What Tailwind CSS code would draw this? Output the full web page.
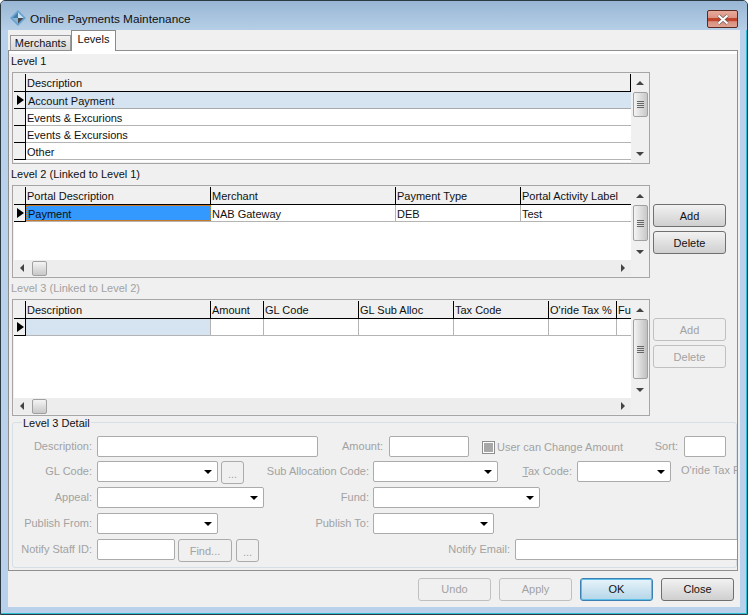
<!DOCTYPE html>
<html lang="en">
<head>
<meta charset="UTF-8">
<title>Online Payments Maintenance</title>
<script src="https://cdn.jsdelivr.net/npm/@tailwindcss/browser@4"></script>
</head>
<body class="bg-white">
<!-- Window frame -->
<div class="w-[748px] h-[615px] overflow-hidden flex flex-col bg-[#b9d1ea] border border-[#2c3a44] rounded-t-[5px] shadow-[inset_-1px_-1px_0_#2fbdd6] font-['Liberation_Sans',sans-serif] text-[11px] leading-[14px] text-[#111]">

  <!-- Title bar -->
  <div class="h-[29px] shrink-0 flex bg-gradient-to-b from-[#98b6d4] to-[#b6cfe7]">
    <svg class="w-[16px] h-[16px] ml-[9px] mt-[9px]" viewBox="0 0 16 16"><path d="M8 0l8 8-8 8-8-8z" fill="#6aa3cf"/><path d="M8 2.5L13.5 8H8z" fill="#c9e2f3"/><path d="M2.5 8L8 2.5V8z" fill="#3f7fb0"/><path d="M8 8h5.5L8 13.5z" fill="#45494d"/><path d="M2.5 8H8v5.5z" fill="#8fb4cf"/></svg>
    <span class="ml-[4px] mt-[11px] text-[11.8px] h-[14px] text-[#101010]">Online Payments Maintenance</span>
    <div class="ml-auto mr-[9px] mt-[9px] w-[31px] h-[18px] flex items-center justify-center border border-[#5a2a22] rounded-[2px] bg-[linear-gradient(#e8ab9c_0%,#dc9383_42%,#c0452c_44%,#c0452c_64%,#d9907f_66%,#e0a191_100%)]">
      <svg class="w-[14px] h-[11px]" viewBox="0 0 14 11"><path d="M2.5 1.5l9 8M11.5 1.5l-9 8" stroke="#6a5a58" stroke-width="3.6" fill="none"/><path d="M2.5 1.5l9 8M11.5 1.5l-9 8" stroke="#fff" stroke-width="2.2" fill="none"/></svg>
    </div>
  </div>

  <!-- Client area -->
  <div class="ml-[7px] w-[732px] h-[577px] shrink-0 bg-[#f0f0f0] flex flex-col">
    <!-- Tabs -->
    <div class="h-[20px] shrink-0 flex items-end pl-[2px]">
      <div class="w-[61px] h-[15px] border border-b-0 border-[#9a9a9a] bg-gradient-to-b from-[#f2f2f2] to-[#d8d8d8] text-center leading-[15px]">Merchants</div>
      <div class="w-[45px] h-[21px] border border-b-0 border-[#8a8a8a] bg-white text-center leading-[17px] relative top-[1px] z-10">Levels</div>
    </div>

    <!-- Tab page -->
    <div class="w-[730px] h-[521px] shrink-0 border border-[#8f8f8f] overflow-hidden">
      <div class="h-[3px] bg-white"></div>
      <div class="pl-[2px]">

        <!-- Level 1 -->
        <div class="h-[14px]">Level 1</div>
        <div class="mt-[4px] ml-[1px] w-[638px] h-[92px] border border-[#a6a6a6] p-[1px] flex">
          <div class="w-[617px] bg-white">
            <div class="flex h-[18px] bg-[#f0f0f0] border-b border-black">
              <div class="w-[12px] border-r border-black"></div>
              <div class="w-[605px] pl-[1px] pt-[2px] border-r border-black">Description</div>
            </div>
            <div class="flex h-[17px] bg-[#d6e4f1] border-b border-[#a9a9a9]">
              <div class="w-[12px] bg-[#f0f0f0] border-r border-black border-b border-b-black -mb-[1px] flex items-center pl-[3px]"><div class="w-0 h-0 border-y-[5px] border-y-transparent border-l-[7px] border-l-black"></div></div>
              <div class="pl-[2px] pt-[2px]">Account Payment</div>
            </div>
            <div class="flex h-[17px] border-b border-[#b4b4b4]">
              <div class="w-[12px] bg-[#f0f0f0] border-r border-black border-b border-b-black -mb-[1px]"></div>
              <div class="pl-[1px] pt-[2px]">Events &amp; Excurions</div>
            </div>
            <div class="flex h-[17px] border-b border-[#b4b4b4]">
              <div class="w-[12px] bg-[#f0f0f0] border-r border-black border-b border-b-black -mb-[1px]"></div>
              <div class="pl-[1px] pt-[2px]">Events &amp; Excursions</div>
            </div>
            <div class="flex h-[17px] border-b border-[#b4b4b4]">
              <div class="w-[12px] bg-[#f0f0f0] border-r border-black border-b border-b-black -mb-[1px]"></div>
              <div class="pl-[1px] pt-[2px]">Other</div>
            </div>
          </div>
          <!-- vertical scrollbar -->
          <div class="w-[16px] ml-[1px] flex flex-col items-center bg-[#f0f0f0]">
            <div class="h-[18px] flex items-center"><div class="w-0 h-0 border-x-[4px] border-x-transparent border-b-[4px] border-b-[#444]"></div></div>
            <div class="w-[15px] h-[25px] border border-[#a0a0a0] rounded-[2px] bg-gradient-to-r from-[#f4f4f4] to-[#c8c8c8] flex flex-col items-center justify-center gap-[1px]">
              <div class="w-[7px] h-[1px] bg-[#666]"></div><div class="w-[7px] h-[1px] bg-[#666]"></div><div class="w-[7px] h-[1px] bg-[#666]"></div><div class="w-[7px] h-[1px] bg-[#666]"></div>
            </div>
            <div class="mt-auto h-[17px] flex items-center"><div class="w-0 h-0 border-x-[4px] border-x-transparent border-t-[4px] border-t-[#444]"></div></div>
          </div>
        </div>

        <!-- Level 2 -->
        <div class="h-[14px] mt-[3px]">Level 2 (Linked to Level 1)</div>
        <div class="flex mt-[4px]">
          <div class="ml-[1px] w-[638px] h-[93px] border border-[#a6a6a6] p-[1px]">
            <div class="flex h-[73px]">
              <div class="w-[617px] bg-white overflow-hidden">
                <div class="flex h-[18px] bg-[#f0f0f0] border-b border-black whitespace-nowrap">
                  <div class="w-[12px] border-r border-black"></div>
                  <div class="w-[185px] pl-[1px] pt-[2px] border-r border-black">Portal Description</div>
                  <div class="w-[185px] pl-[1px] pt-[2px] border-r border-black">Merchant</div>
                  <div class="w-[125px] pl-[1px] pt-[2px] border-r border-black">Payment Type</div>
                  <div class="w-[110px] pl-[1px] pt-[2px]">Portal Activity Label</div>
                </div>
                <div class="flex h-[17px] border-b border-[#b4b4b4]">
                  <div class="w-[12px] bg-[#f0f0f0] border-r border-black border-b border-b-black -mb-[1px] flex items-center pl-[3px]"><div class="w-0 h-0 border-y-[5px] border-y-transparent border-l-[7px] border-l-black"></div></div>
                  <div class="w-[185px] pl-[1px] pt-[1px] bg-[#3399ff] border border-dotted border-[#c77a2a] text-[#0b0b0b]">Payment</div>
                  <div class="w-[185px] pl-[1px] pt-[2px] border-r border-[#b4b4b4]">NAB Gateway</div>
                  <div class="w-[125px] pl-[1px] pt-[2px] border-r border-[#b4b4b4]">DEB</div>
                  <div class="w-[110px] pl-[1px] pt-[2px]">Test</div>
                </div>
              </div>
              <div class="w-[16px] ml-[1px] flex flex-col items-center bg-[#f0f0f0]">
                <div class="h-[18px] flex items-center"><div class="w-0 h-0 border-x-[4px] border-x-transparent border-b-[4px] border-b-[#444]"></div></div>
                <div class="w-[15px] h-[36px] border border-[#a0a0a0] rounded-[2px] bg-gradient-to-r from-[#f4f4f4] to-[#c8c8c8] flex flex-col items-center justify-center gap-[1px]">
                  <div class="w-[7px] h-[1px] bg-[#666]"></div><div class="w-[7px] h-[1px] bg-[#666]"></div><div class="w-[7px] h-[1px] bg-[#666]"></div><div class="w-[7px] h-[1px] bg-[#666]"></div>
                </div>
                <div class="mt-auto h-[17px] flex items-center"><div class="w-0 h-0 border-x-[4px] border-x-transparent border-t-[4px] border-t-[#444]"></div></div>
              </div>
            </div>
            <!-- horizontal scrollbar -->
            <div class="w-[617px] h-[16px] bg-[#ededed] flex items-center">
              <div class="ml-[6px] w-0 h-0 border-y-[4px] border-y-transparent border-r-[4px] border-r-[#444]"></div>
              <div class="ml-[8px] w-[15px] h-[15px] border border-[#a0a0a0] rounded-[2px] bg-gradient-to-b from-[#f4f4f4] to-[#c8c8c8]"></div>
              <div class="ml-auto mr-[6px] w-0 h-0 border-y-[4px] border-y-transparent border-l-[4px] border-l-[#444]"></div>
            </div>
          </div>
          <div class="ml-[3px] mt-[19px] flex flex-col gap-[4px]">
            <div class="w-[73px] h-[23px] border border-[#707070] rounded-[3px] bg-gradient-to-b from-[#f2f2f2] to-[#cfcfcf] text-center leading-[23px]">Add</div>
            <div class="w-[73px] h-[23px] border border-[#707070] rounded-[3px] bg-gradient-to-b from-[#f2f2f2] to-[#cfcfcf] text-center leading-[23px]">Delete</div>
          </div>
        </div>

        <!-- Level 3 -->
        <div class="h-[14px] mt-[3px] text-[#a2a2a2]">Level 3 (Linked to Level 2)</div>
        <div class="flex mt-[4px]">
          <div class="ml-[1px] w-[638px] h-[117px] border border-[#a6a6a6] p-[1px]">
            <div class="flex h-[97px]">
              <div class="w-[617px] bg-white overflow-hidden">
                <div class="flex h-[18px] bg-[#f0f0f0] border-b border-black whitespace-nowrap">
                  <div class="w-[12px] border-r border-black"></div>
                  <div class="w-[185px] pl-[1px] pt-[2px] border-r border-black">Description</div>
                  <div class="w-[53px] pl-[1px] pt-[2px] border-r border-black">Amount</div>
                  <div class="w-[95px] pl-[1px] pt-[2px] border-r border-black">GL Code</div>
                  <div class="w-[95px] pl-[1px] pt-[2px] border-r border-black">GL Sub Alloc</div>
                  <div class="w-[95px] pl-[1px] pt-[2px] border-r border-black">Tax Code</div>
                  <div class="w-[68px] pl-[1px] pt-[2px] border-r border-black">O'ride Tax %</div>
                  <div class="w-[14px] pl-[1px] pt-[2px] overflow-hidden">Fu</div>
                </div>
                <div class="flex h-[17px] border-b border-[#b4b4b4]">
                  <div class="w-[12px] bg-[#f0f0f0] border-r border-black border-b border-b-black -mb-[1px] flex items-center pl-[3px]"><div class="w-0 h-0 border-y-[5px] border-y-transparent border-l-[7px] border-l-black"></div></div>
                  <div class="w-[185px] bg-[#d6e4f1] border-r border-[#b4b4b4]"></div>
                  <div class="w-[53px] border-r border-[#b4b4b4]"></div>
                  <div class="w-[95px] border-r border-[#b4b4b4]"></div>
                  <div class="w-[95px] border-r border-[#b4b4b4]"></div>
                  <div class="w-[95px] border-r border-[#b4b4b4]"></div>
                  <div class="w-[68px] border-r border-[#b4b4b4]"></div>
                </div>
              </div>
              <div class="w-[16px] ml-[1px] flex flex-col items-center bg-[#f0f0f0]">
                <div class="h-[18px] flex items-center"><div class="w-0 h-0 border-x-[4px] border-x-transparent border-b-[4px] border-b-[#444]"></div></div>
                <div class="w-[15px] h-[60px] border border-[#a0a0a0] rounded-[2px] bg-gradient-to-r from-[#f4f4f4] to-[#c0c0c0] flex flex-col items-center justify-center gap-[1px]">
                  <div class="w-[7px] h-[1px] bg-[#666]"></div><div class="w-[7px] h-[1px] bg-[#666]"></div><div class="w-[7px] h-[1px] bg-[#666]"></div><div class="w-[7px] h-[1px] bg-[#666]"></div>
                </div>
                <div class="mt-auto h-[17px] flex items-center"><div class="w-0 h-0 border-x-[4px] border-x-transparent border-t-[4px] border-t-[#444]"></div></div>
              </div>
            </div>
            <div class="w-[617px] h-[16px] bg-[#ededed] flex items-center">
              <div class="ml-[6px] w-0 h-0 border-y-[4px] border-y-transparent border-r-[4px] border-r-[#444]"></div>
              <div class="ml-[8px] w-[15px] h-[15px] border border-[#a0a0a0] rounded-[2px] bg-gradient-to-b from-[#f4f4f4] to-[#c8c8c8]"></div>
              <div class="ml-auto mr-[6px] w-0 h-0 border-y-[4px] border-y-transparent border-l-[4px] border-l-[#444]"></div>
            </div>
          </div>
          <div class="ml-[3px] mt-[19px] flex flex-col gap-[4px] text-[#a2a2a2]">
            <div class="w-[73px] h-[23px] border border-[#c0c0c0] rounded-[3px] text-center leading-[23px]">Add</div>
            <div class="w-[73px] h-[23px] border border-[#c0c0c0] rounded-[3px] text-center leading-[23px]">Delete</div>
          </div>
        </div>

        <!-- Level 3 Detail -->
        <div class="ml-[1px] mt-[6px] w-[725px] h-[146px] border border-[#d5dfe5] rounded-[3px] pt-[13px] text-[#a2a2a2] relative whitespace-nowrap">
          <span class="absolute left-[9px] -top-[7px] px-[1px] bg-[#f0f0f0] text-[#111]">Level 3 Detail</span>

          <div class="flex h-[21px] *:shrink-0">
            <span class="w-[79px] text-right leading-[20px]">Description:</span>
            <div class="ml-[5px] w-[221px] bg-white border border-[#ababab] rounded-[2px]"></div>
            <span class="w-[65px] text-right leading-[20px]">Amount:</span>
            <div class="ml-[6px] w-[80px] bg-white border border-[#ababab] rounded-[2px]"></div>
            <div class="ml-[13px] mt-[5px] w-[13px] h-[13px] border border-[#8e8e8e] bg-white p-[1px]"><div class="w-full h-full bg-[#a8a8a8]"></div></div>
            <span class="ml-[2px] w-[123px] leading-[22px]">User can Change Amount</span>
            <span class="w-[58px] text-right leading-[20px]">Sort:</span>
            <div class="ml-[6px] w-[42px] bg-white border border-[#ababab] rounded-[2px]"></div>
          </div>

          <div class="flex h-[21px] mt-[4px] *:shrink-0">
            <span class="w-[79px] text-right leading-[20px]">GL Code:</span>
            <div class="ml-[5px] w-[121px] bg-white border border-[#ababab] rounded-[2px] flex items-center justify-end pr-[5px]"><div class="w-0 h-0 border-x-[4px] border-x-transparent border-t-[4px] border-t-black"></div></div>
            <div class="ml-[3px] w-[23px] h-[23px] border border-[#ababab] rounded-[3px] text-center leading-[24px]">...</div>
            <span class="w-[125px] text-right leading-[20px]">Sub Allocation Code:</span>
            <div class="ml-[4px] w-[125px] bg-white border border-[#ababab] rounded-[2px] flex items-center justify-end pr-[5px]"><div class="w-0 h-0 border-x-[4px] border-x-transparent border-t-[4px] border-t-black"></div></div>
            <span class="w-[74px] text-right leading-[20px]"><u>T</u>ax Code:</span>
            <div class="ml-[5px] w-[94px] bg-white border border-[#ababab] rounded-[2px] flex items-center justify-end pr-[5px]"><div class="w-0 h-0 border-x-[4px] border-x-transparent border-t-[4px] border-t-black"></div></div>
            <span class="ml-[10px] leading-[18px]">O'ride Tax Percent:</span>
          </div>

          <div class="flex h-[21px] mt-[5px] *:shrink-0">
            <span class="w-[79px] text-right leading-[20px]">Appeal:</span>
            <div class="ml-[5px] w-[167px] bg-white border border-[#ababab] rounded-[2px] flex items-center justify-end pr-[5px]"><div class="w-0 h-0 border-x-[4px] border-x-transparent border-t-[4px] border-t-black"></div></div>
            <span class="w-[105px] text-right leading-[20px]">Fund:</span>
            <div class="ml-[4px] w-[167px] bg-white border border-[#ababab] rounded-[2px] flex items-center justify-end pr-[5px]"><div class="w-0 h-0 border-x-[4px] border-x-transparent border-t-[4px] border-t-black"></div></div>
          </div>

          <div class="flex h-[21px] mt-[5px] *:shrink-0">
            <span class="w-[79px] text-right leading-[20px]">Publish From:</span>
            <div class="ml-[5px] w-[121px] bg-white border border-[#ababab] rounded-[2px] flex items-center justify-end pr-[5px]"><div class="w-0 h-0 border-x-[4px] border-x-transparent border-t-[4px] border-t-black"></div></div>
            <span class="w-[151px] text-right leading-[20px]">Publish To:</span>
            <div class="ml-[4px] w-[121px] bg-white border border-[#ababab] rounded-[2px] flex items-center justify-end pr-[5px]"><div class="w-0 h-0 border-x-[4px] border-x-transparent border-t-[4px] border-t-black"></div></div>
          </div>

          <div class="flex h-[21px] mt-[5px] *:shrink-0">
            <span class="w-[79px] text-right leading-[20px]">Notify Staff ID:</span>
            <div class="ml-[5px] w-[78px] bg-white border border-[#ababab] rounded-[2px]"></div>
            <div class="ml-[3px] w-[54px] h-[23px] border border-[#ababab] rounded-[3px] text-center leading-[22px]">Find...</div>
            <div class="ml-[4px] w-[23px] h-[23px] border border-[#ababab] rounded-[3px] text-center leading-[24px]">...</div>
            <span class="w-[251px] text-right leading-[20px]">Notify Email:</span>
            <div class="ml-[5px] w-[240px] bg-white border border-[#ababab] rounded-[2px]"></div>
          </div>
        </div>
      </div>
    </div>

    <!-- Dialog buttons -->
    <div class="flex justify-end gap-[8px] pr-[6px] mt-[7px]">
      <div class="w-[73px] h-[23px] border border-[#c0c0c0] rounded-[3px] text-center leading-[21px] text-[#a2a2a2]">Undo</div>
      <div class="w-[73px] h-[23px] border border-[#c0c0c0] rounded-[3px] text-center leading-[21px] text-[#a2a2a2]">Apply</div>
      <div class="w-[73px] h-[23px] border border-[#3c7fb1] rounded-[3px] bg-gradient-to-b from-[#e8f4fb] to-[#b4d6e8] shadow-[inset_0_0_0_1px_#5cc0ea] text-center leading-[21px]">OK</div>
      <div class="w-[73px] h-[23px] border border-[#707070] rounded-[3px] bg-gradient-to-b from-[#f2f2f2] to-[#cfcfcf] text-center leading-[21px]">Close</div>
    </div>
  </div>
</div>
</body>
</html>
